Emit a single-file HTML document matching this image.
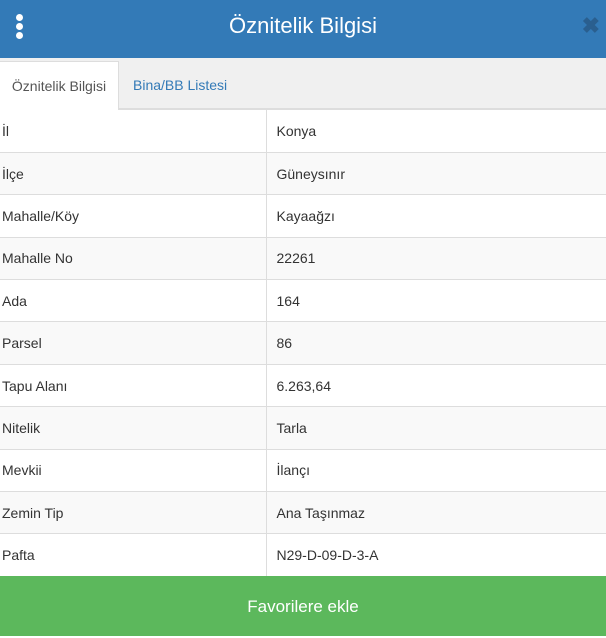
<html><head><style>
body{margin:0;width:606px;height:636px;overflow:hidden;font-family:"Liberation Sans",sans-serif;position:relative;background:#fff}
.hd{position:absolute;top:0;left:0;width:606px;height:58px;background:#337ab7;color:#fff;text-align:center;font-size:22px;line-height:52px}
.dots{position:absolute;left:16px;top:14px;width:7px}
.dots i{display:block;width:7px;height:7px;border-radius:50%;background:#fff;margin-bottom:2px}
.x{position:absolute;right:6px;top:0;color:#2a5f8f;font-size:22px;font-weight:bold;line-height:52px}
.tabs{position:absolute;top:58px;left:0;width:606px;height:50px;background:#f0f0f0;border-bottom:2px solid #ddd}
.t1{position:absolute;left:0;top:3px;width:119px;height:49px;background:#fff;border:1px solid #ddd;border-left:0;border-bottom:0;font-size:14px;color:#555;line-height:48px;text-align:center;box-sizing:border-box}
.t2{position:absolute;left:133px;top:3px;font-size:14px;color:#337ab7;line-height:48px}
table{position:absolute;top:110px;left:0;width:606px;border-collapse:collapse;font-size:14px;color:#333}
td{height:42.4px;padding:0 2px;border-bottom:1px solid #ddd;box-sizing:border-box}
td+td{border-left:1px solid #ddd;padding-left:10px;width:340px}
tr:nth-child(even){background:#f9f9f9}
.btn{position:absolute;left:0;top:576px;width:606px;height:60px;background:#5cb85c;color:#fff;font-size:17px;text-align:center;line-height:62px}
</style></head><body>
<div class="hd">Öznitelik Bilgisi<div class="dots"><i></i><i></i><i></i></div><div class="x">✖</div></div>
<div class="tabs"><div class="t1">Öznitelik Bilgisi</div><div class="t2">Bina/BB Listesi</div></div>
<table>
<tr><td>İl</td><td>Konya</td></tr>
<tr><td>İlçe</td><td>Güneysınır</td></tr>
<tr><td>Mahalle/Köy</td><td>Kayaağzı</td></tr>
<tr><td>Mahalle No</td><td>22261</td></tr>
<tr><td>Ada</td><td>164</td></tr>
<tr><td>Parsel</td><td>86</td></tr>
<tr><td>Tapu Alanı</td><td>6.263,64</td></tr>
<tr><td>Nitelik</td><td>Tarla</td></tr>
<tr><td>Mevkii</td><td>İlançı</td></tr>
<tr><td>Zemin Tip</td><td>Ana Taşınmaz</td></tr>
<tr><td>Pafta</td><td>N29-D-09-D-3-A</td></tr>
</table>
<div class="btn">Favorilere ekle</div>
</body></html>
